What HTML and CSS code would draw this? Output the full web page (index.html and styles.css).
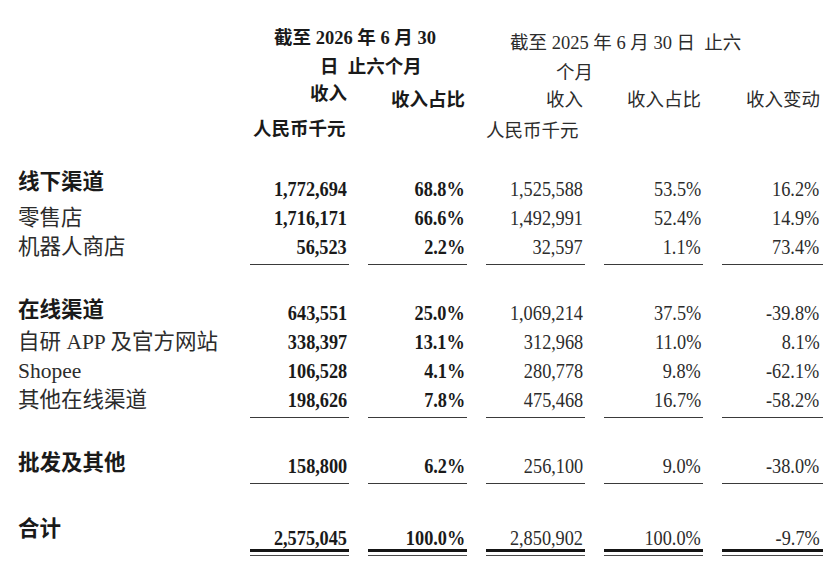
FILE: index.html
```html
<!DOCTYPE html>
<html lang="zh-CN">
<head>
<meta charset="utf-8">
<title>收入明细</title>
<link rel="stylesheet" href="styles.css">
</head>
<body>
<div class="sheet">
  <header class="head">
    <div class="period period-now">
      <div class="pline pline-1">截至 2026 年 6 月 30</div>
      <div class="pline pline-2">日&ensp;止六个月</div>
    </div>
    <div class="period period-prev">
      <div class="pline pline-1">截至 2025 年 6 月 30 日&ensp;止六</div>
      <div class="pline pline-2">个月</div>
    </div>
    <div class="title c1 strong">收入</div>
    <div class="title c2 strong drop">收入占比</div>
    <div class="title c3 drop">收入</div>
    <div class="title c4 drop">收入占比</div>
    <div class="title c5 drop">收入变动</div>
    <div class="unit c1 strong">人民币千元</div>
    <div class="unit c3 unit-prev">人民币千元</div>
  </header>

  <section class="body">
    <div class="group">
      <div class="row">
        <div class="label strong lift-lg">线下渠道</div>
        <div class="num strong"><span>1,772,694</span></div>
        <div class="num strong"><span>68.8%</span></div>
        <div class="num"><span>1,525,588</span></div>
        <div class="num"><span>53.5%</span></div>
        <div class="num"><span>16.2%</span></div>
      </div>
      <div class="row">
        <div class="label">零售店</div>
        <div class="num strong"><span>1,716,171</span></div>
        <div class="num strong"><span>66.6%</span></div>
        <div class="num"><span>1,492,991</span></div>
        <div class="num"><span>52.4%</span></div>
        <div class="num"><span>14.9%</span></div>
      </div>
      <div class="row ul">
        <div class="label">机器人商店</div>
        <div class="num strong"><span>56,523</span></div>
        <div class="num strong"><span>2.2%</span></div>
        <div class="num"><span>32,597</span></div>
        <div class="num"><span>1.1%</span></div>
        <div class="num"><span>73.4%</span></div>
      </div>
    </div>

    <div class="group">
      <div class="row">
        <div class="label strong lift-sm">在线渠道</div>
        <div class="num strong"><span>643,551</span></div>
        <div class="num strong"><span>25.0%</span></div>
        <div class="num"><span>1,069,214</span></div>
        <div class="num"><span>37.5%</span></div>
        <div class="num"><span>-39.8%</span></div>
      </div>
      <div class="row">
        <div class="label">自研 APP 及官方网站</div>
        <div class="num strong"><span>338,397</span></div>
        <div class="num strong"><span>13.1%</span></div>
        <div class="num"><span>312,968</span></div>
        <div class="num"><span>11.0%</span></div>
        <div class="num"><span>8.1%</span></div>
      </div>
      <div class="row">
        <div class="label">Shopee</div>
        <div class="num strong"><span>106,528</span></div>
        <div class="num strong"><span>4.1%</span></div>
        <div class="num"><span>280,778</span></div>
        <div class="num"><span>9.8%</span></div>
        <div class="num"><span>-62.1%</span></div>
      </div>
      <div class="row ul">
        <div class="label">其他在线渠道</div>
        <div class="num strong"><span>198,626</span></div>
        <div class="num strong"><span>7.8%</span></div>
        <div class="num"><span>475,468</span></div>
        <div class="num"><span>16.7%</span></div>
        <div class="num"><span>-58.2%</span></div>
      </div>
    </div>

    <div class="group group-wholesale">
      <div class="row ul">
        <div class="label strong lift-sm">批发及其他</div>
        <div class="num strong"><span>158,800</span></div>
        <div class="num strong"><span>6.2%</span></div>
        <div class="num"><span>256,100</span></div>
        <div class="num"><span>9.0%</span></div>
        <div class="num"><span>-38.0%</span></div>
      </div>
    </div>

    <div class="group group-total">
      <div class="row dbl">
        <div class="label strong lift-xl">合计</div>
        <div class="num strong"><span>2,575,045</span></div>
        <div class="num strong"><span>100.0%</span></div>
        <div class="num"><span>2,850,902</span></div>
        <div class="num"><span>100.0%</span></div>
        <div class="num"><span>-9.7%</span></div>
      </div>
    </div>
  </section>
</div>
</body>
</html>
```

FILE: styles.css
```css
html, body {
  margin: 0;
  padding: 0;
  background: #ffffff;
}

.sheet {
  width: 834px;
  height: 575px;
  overflow: hidden;
  padding-left: 18px;
  box-sizing: border-box;
  font-family: "Liberation Serif", "Noto Sans CJK SC", serif;
  color: #2c2c2c;
}

.strong {
  font-weight: 700;
  color: #1a1a1a;
}

/* shared column grid */
.head,
.row {
  display: grid;
  grid-template-columns: 213px 99px 99px 99px 99px 101px;
  column-gap: 19px;
}

/* ---------- header ---------- */
.head {
  padding-top: 24px;
  grid-template-rows: 56px auto auto;
  font-size: 18.5px;
  line-height: 29px;
  white-space: nowrap;
}

.period-now {
  grid-column: 2 / 4;
  grid-row: 1;
  font-weight: 700;
  color: #1a1a1a;
}

.period-prev {
  grid-column: 4 / 7;
  grid-row: 1;
  margin-top: 4px;
  line-height: 30px;
}

.pline-1 { padding-left: 24px; }
.pline-2 { padding-left: 70px; }

.title {
  grid-row: 2;
  text-align: right;
  padding-right: 2px;
}

.c1 { grid-column: 2; }
.c2 { grid-column: 3; }
.c3 { grid-column: 4; }
.c4 { grid-column: 5; }
.c5 { grid-column: 6; padding-right: 3px; }

.drop { margin-top: 6px; }

.unit {
  grid-row: 3;
  text-align: left;
}
.unit.c1 { padding-left: 3px; }
.unit-prev { margin-top: 2px; }

/* ---------- body ---------- */
.body {
  margin-top: 29px;
}

.group + .group { margin-top: 34px; }
.group-wholesale { margin-top: 35px; }
.group + .group-total { margin-top: 40px; }

.row {
  font-size: 21px;
  line-height: 29px;
}

.label {
  font-size: 21.5px;
  white-space: nowrap;
}

.lift-sm { margin-top: -3px; }
.lift-lg { margin-top: -7px; }
.lift-xl { margin-top: -9px; }

.num {
  text-align: right;
  padding-right: 2px;
  white-space: nowrap;
}
.num:last-child { padding-right: 3.5px; }

.num span {
  display: inline-block;
  transform: scaleX(0.87);
  transform-origin: 100% 50%;
}

.row.ul > .num {
  padding-bottom: 2px;
  border-bottom: 1px solid #3a3a3a;
}

.row.dbl > .num {
  padding-bottom: 3px;
  background-image: linear-gradient(#151515, #151515), linear-gradient(#4a4a4a, #4a4a4a);
  background-size: 100% 3px, 100% 1px;
  background-position: 0 calc(100% - 4px), 0 100%;
  background-repeat: no-repeat;
}
```
